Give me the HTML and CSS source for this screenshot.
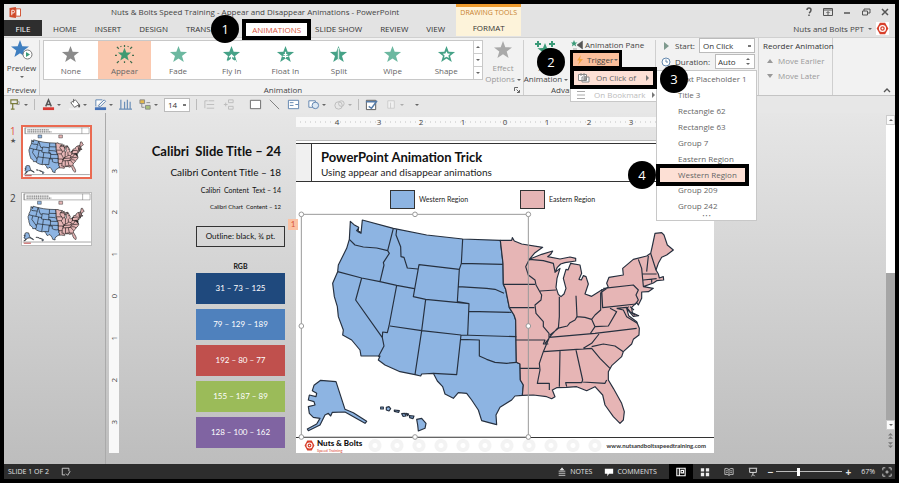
FILE: index.html
```html
<!DOCTYPE html>
<html lang="en">
<head>
<meta charset="utf-8">
<title>Nuts &amp; Bolts Speed Training - Appear and Disappear Animations - PowerPoint</title>
<link rel="stylesheet" href="styles.css">
</head>
<body>
<svg class="defs" aria-hidden="true">
  <symbol id="star" viewBox="0 0 20 20"><path d="M10 1l2.300 6.200 6.700.2-5.300 4.100 1.900 6.500L10 14.300l-5.600 3.700 1.900-6.500L1 7.400l6.700-.2z"/></symbol>
  <symbol id="nut" viewBox="0 0 20 20"><path d="M6 1h8l5 9-5 9H6L1 10z" fill="#d8402c"/><circle cx="10" cy="10" r="4.500" fill="#d8402c" stroke="#fff" stroke-width="2"/><circle cx="10" cy="10" r="1.500" fill="#fff"/></symbol>
  <g id="usa" stroke-linejoin="round">
    <g fill="#8db4e2">
      <path d="M151 64L162 74 176 82 174 95 183 100 187 60 280 85 380 105 488 117 601 121 609 190 610 253 617 268 628 323 642 345 647 360 649 487 660 492 661 540 670 555 667 586 645 588 635 600 600 622 588 645 590 674 567 668 545 662 535 630 515 600 500 580 475 578 460 595 435 582 428 560 412 543 400 520 365 522 362 528 345 524 300 515 255 495 235 480 240 468 183 468 180 450 155 420 128 405 130 390 115 350 112 320 103 290 98 250 113 215 115 195 140 145 148 118z"/>
      <path d="M62 541L108 545 135 628 160 638 200 664 195 670 135 636 97 637 92 648 85 640 75 645 60 675 25 692 22 687 50 672 60 655 40 652 28 640 25 620 45 615 42 605 25 600 28 585 48 590 50 580 37 572 42 556z"/>
      <path d="M350 658L365 655 378 670 375 685 355 693 353 675z"/>
      <path d="M242 621h8v6h-8zM259 622l8-2 5 6-5 7-8-3zM283 630l15 2-2 5-13-3zM305 641l9-1 4 8-9 1zM318 640l8 2-3 5zM328 647l14 1-3 8-10-3z"/>
    </g>
    <g transform="translate(540)" fill="#e6b5b5">
      <path d="M61 121L95 121 97 113 103 123 125 132 188 142 165 158 148 178 185 163 218 153 212 163 203 170 240 177 270 171 287 175 287 183 255 188 242 192 232 202 225 217 240 205 231 235 228 262 235 283 243 290 252 282 258 265 250 235 258 208 264 210 272 190 300 195 305 220 297 238 304 240 310 227 318 230 325 252 315 282 335 289 365 270 385 262 380 250 387 232 430 225 428 205 460 178 500 168 512 160 517 138 525 100 545 98 552 105 562 135 580 150 560 165 545 172 535 190 528 210 535 222 538 234 550 230 551 240 530 242 520 249 490 260 520 265 505 275 485 276 485 295 475 315 470 308 455 322 457 338 476 347 460 349 440 325 446 347 470 365 478 385 477 405 460 418 455 432 430 455 425 470 395 497 385 515 385 540 400 565 425 610 433 635 430 660 420 670 400 650 375 615 368 585 345 560 320 572 290 560 260 562 230 563 217 570 225 590 215 596 200 590 160 585 127 586 130 555 121 540 120 492 109 487 107 360 102 345 88 323 77 268 70 253 69 190z"/>
    </g>
    <g fill="none">
      <path d="M148 118L165 135 190 141 230 144 263 152M280 85L263 152 268 160 250 188 252 195 240 245M113 215L185 234 240 245 290 256 343 266M290 88L288 105 302 140 303 170 312 172 322 204 353 207M478 208L357 194 340 290 377 298 507 311 503 405M488 117L484 190 478 208 472 305M484 190L609 193M475 260L560 265 585 268 612 280M377 298L365 392 345 524M507 334L634 337M185 234L167 300 247 413M290 256L267 378 262 398 248 396 247 413 252 438 235 470M270 378L365 392 483 405 649 410M483 405L470 524 400 520M472 305L507 311M481 418L538 420 538 468 560 478 585 487 620 490 649 487M176 84L170 92 182 96"/>
      <path transform="translate(540)" d="M72 253H165M148 178L137 200 145 225 165 240 168 255 185 285 183 300 165 315 168 340 190 365 190 380 207 400 207 415 195 430M88 323H163M180 273L228 270M238 290V350L235 385 210 405M288 287L291 350M210 410L232 385 262 378 270 368 285 360 291 350 315 352 335 358 345 345 362 330 362 278M365 268L368 323 468 312M362 278L385 262M108 420H195L190 432H205M120 505H177M207 415L190 455 178 490 180 510 172 550H208V570M207 412L345 400 470 385M190 455L335 445M357 402L335 430 310 445M240 452L238 560M288 450L308 540 305 548 257 548 260 560M308 546L375 550 380 540M335 445L360 475 390 505M335 440L370 432 405 438 430 455M370 265L460 255 475 270 468 285 475 300 468 310M335 358L345 380 385 378 410 335 390 325M345 380L330 402M410 325L440 322 450 335 465 345M410 325L430 330 440 350 472 370M475 178L485 205 490 258M505 168L500 215M512 160L528 210M488 222H530M490 240L530 236M148 178L190 182 220 190 225 215M515 238V248M446 320L440 325M450 320L462 330"/>
    </g>
  </g>
  <symbol id="mini" viewBox="-12 -180 1254 936">
    <path d="M20-165H1225V-55H20zM35-165V-55M1090-165V-55" fill="none" stroke="#555" stroke-width="8"/>
    <path d="M70-125H480M70-88H520" stroke="#777" stroke-width="22" stroke-dasharray="24 10"/>
    <path d="M270-30h68v54h-68z" fill="#8db4e2" stroke="#222" stroke-width="8"/><path d="M658-30h68v54h-68z" fill="#e6b5b5" stroke="#222" stroke-width="8"/>
    <use href="#usa" stroke="#111" stroke-width="11"/>
    <path d="M0 711H1240" stroke="#333" stroke-width="8"/><path d="M20 732H150" stroke="#b44" stroke-width="18"/>
  </symbol>
</svg>

<div class="app">
  <header class="titlebar">
    <svg class="app-logo" viewBox="0 0 12 12" aria-hidden="true"><path d="M0 1l7-1v12l-7-1z" fill="#d04a2a"/><path d="M7 2h5v8H7z" fill="#fff" stroke="#d04a2a"/><path d="M2.500 9V3.500h1.500a1.500 1.500 0 0 1 0 3H2.500" fill="none" stroke="#fff"/></svg>
    <h1>Nuts &amp; Bolts Speed Training - Appear and Disappear Animations - PowerPoint</h1>
    <div class="winbtns">
      <button aria-label="Help"><svg viewBox="0 0 10 10"><path d="M3 3q0-2 2-2t2 2-2 3M5 7.500V9" stroke-width="1.500"/></svg></button>
      <button aria-label="Ribbon options"><svg viewBox="0 0 10 10"><path d="M.5 1.500h9v7h-9zM.5 3h9M5 8V5M3.500 6L5 4.500 6.500 6"/></svg></button>
      <button aria-label="Minimize"><svg viewBox="0 0 10 10"><path d="M2 6h6" stroke-width="1.500"/></svg></button>
      <button aria-label="Restore"><svg viewBox="0 0 10 10"><path d="M1.500 4h5v4h-5zM3 4V2h6v4H7"/></svg></button>
      <button aria-label="Close"><svg viewBox="0 0 10 10"><path d="M2 2l6 6M8 2L2 8" stroke-width="1.500"/></svg></button>
    </div>
  </header>

  <nav class="tabs">
    <button class="tab file">FILE</button>
    <button class="tab">HOME</button>
    <button class="tab">INSERT</button>
    <button class="tab">DESIGN</button>
    <button class="tab">TRANSITIONS</button>
    <button class="tab active">ANIMATIONS<span class="badge step-one">1</span></button>
    <button class="tab">SLIDE SHOW</button>
    <button class="tab">REVIEW</button>
    <button class="tab">VIEW</button>
    <div class="context"><span>DRAWING TOOLS</span><button class="tab">FORMAT</button></div>
    <div class="user">Nuts and Bolts PPT <i class="caret"></i><svg viewBox="0 0 20 20"><use href="#nut"/></svg></div>
  </nav>

  <section class="ribbon">
    <div class="group preview">
      <button class="big"><svg viewBox="0 0 22 20"><path d="M9 0l2.300 6.200 6.700.2-5.300 4.100 1.900 6.500L9 13.300 3.400 17l1.900-6.500L0 6.400l6.700-.2z" fill="#3f7fc0"/><circle cx="16.500" cy="14.500" r="4.500" fill="#fff" stroke="#777"/><path d="M15 12l4 2.500-4 2.500z" fill="#3b9a78"/></svg>Preview<i class="caret"></i></button>
      <span class="label">Preview</span>
    </div>
    <div class="group animation">
      <div class="row">
        <div class="gallery">
          <button class="none"><svg viewBox="0 0 20 20"><use href="#star"/></svg>None</button>
          <button class="chosen"><svg viewBox="0 0 20 20"><path d="M10 3l1.900 4.800 5.100.2-4 3.200 1.400 5-4.400-2.800-4.400 2.800 1.400-5-4-3.200 5.100-.2z"/><path d="M2 2l2 2M10 0v2M18 2l-2 2M0 11h2M18 11h2M2 19l2-2M18 19l-2-2M6 1l.5 1M14 1l-.5 1M10 17v2" stroke="#3d6b4c" stroke-width="1.300"/></svg>Appear</button>
          <button class="fade"><svg viewBox="0 0 20 20"><use href="#star"/></svg>Fade</button>
          <button><svg viewBox="0 0 20 20"><use href="#star"/><path d="M10 18v-7M7.500 13L10 10.500 12.500 13M5 19v-3M14 19v-3" fill="none" stroke="#fff" stroke-width="1.500"/></svg>Fly In</button>
          <button><svg viewBox="0 0 20 20"><use href="#star"/><path d="M10 7v7M8 10h4M7 12h6" stroke="#fff" stroke-width="1.300"/></svg>Float In</button>
          <button><svg viewBox="0 0 20 20"><use href="#star"/><path d="M10 3v13" stroke="#d5ebe3" stroke-width="1.500"/></svg>Split</button>
          <button class="wipe"><svg viewBox="0 0 20 20"><use href="#star"/></svg>Wipe</button>
          <button><svg viewBox="0 0 20 20"><use href="#star"/><path d="M10 6.500l1.200 2.500 2.800.2-2 1.900.6 2.700-2.600-1.500-2.600 1.500.6-2.700-2-1.900 2.800-.2z" fill="#fff"/></svg>Shape</button>
          <div class="scroll"><button aria-label="Scroll up"><i class="caret up"></i></button><button aria-label="Scroll down"><i class="caret"></i></button><button aria-label="More"><i class="caret"></i></button></div>
        </div>
        <button class="big effect"><svg viewBox="0 0 20 20"><use href="#star"/></svg>Effect<span>Options <i class="caret"></i></span></button>
      </div>
      <span class="label">Animation<svg class="launcher" viewBox="0 0 6 6"><path d="M.5 4V.5H4M2.500 2.500l3 3M5.500 3v2.500H3" fill="none" stroke="#666"/></svg></span>
    </div>
    <div class="group advanced">
      <div class="row">
        <button class="big add"><svg viewBox="0 0 22 20"><path d="M10 3l2 5 5.500.2-4.300 3.400 1.500 5.400-4.700-3L5.300 17l1.500-5.400L2.500 8.200 8 8z" fill="#3b9a78"/><path d="M3 1v6M0 4h6M17 1v6M14 4h6" stroke="#3b9a78" stroke-width="2"/></svg>Add<span>Animation <i class="caret"></i></span><span class="badge step-two">2</span></button>
        <div class="stack">
          <button class="line"><svg viewBox="0 0 12 10"><path d="M3 0l1 2.500h2.500L4.500 4l.7 2.500L3 5 1 6.500 1.500 4 0 2.500h2z" fill="#3b9a78"/><path d="M11.500 1v8L6 5zM2 9h4" fill="#555" stroke="#555" stroke-width=".5"/></svg>Animation Pane</button>
          <div class="trigger">
            <button class="line framed"><svg viewBox="0 0 12 10"><path d="M7 0L3 5.500h2.500L4 10l5-6H6z" fill="#f2a443"/></svg>Trigger<i class="caret"></i></button>
            <ul class="menu first">
              <li class="framed"><svg viewBox="0 0 12 10"><path d="M.5 1.500h8v6h-8zM3 0v3M6 0v3M4 4h7v5H4z" fill="#fff" stroke="#888"/><path d="M7 3v5M5 6h4" stroke="#777"/></svg>On Click of<i class="caret right"></i><span class="badge step-three">3</span></li>
              <li class="dim"><svg viewBox="0 0 12 10"><path d="M1 1.500h8M1 5h8M1 8.500h8" stroke="#aaa"/></svg>On Bookmark<i class="caret right"></i></li>
            </ul>
          </div>
        </div>
      </div>
      <span class="label">Advanced Animation</span>
    </div>
    <div class="group timing">
      <div class="field"><svg viewBox="0 0 10 10"><path d="M3 1l5 4-5 4z" fill="#7f9a8e"/></svg><label for="start">Start:</label><select id="start"><option>On Click</option></select></div>
      <div class="field"><svg viewBox="0 0 10 10"><circle cx="5" cy="5" r="4" fill="#fff" stroke="#6488ad"/><path d="M5 2.500V5h2" fill="none" stroke="#6488ad"/></svg><label for="duration">Duration:</label><span class="spin"><input id="duration" value="Auto"><span><i class="caret up"></i><i class="caret"></i></span></span></div>
      <ul class="menu second">
        <li>Text Placeholder 1</li>
        <li>Title 3</li>
        <li>Rectangle 62</li>
        <li>Rectangle 63</li>
        <li>Group 7</li>
        <li>Eastern Region</li>
        <li class="framed">Western Region<span class="badge step-four">4</span></li>
        <li>Group 209</li>
        <li>Group 242</li>
        <li class="more">• • •</li>
      </ul>
    </div>
    <div class="group reorder">
      <b>Reorder Animation</b>
      <button class="line"><i class="tri up"></i>Move Earlier</button>
      <button class="line"><i class="tri"></i>Move Later</button>
    </div>
    <button class="collapse" aria-label="Collapse ribbon"><svg viewBox="0 0 8 6"><path d="M1 5l3-3 3 3" fill="none" stroke="#555" stroke-width="1.300"/></svg></button>
  </section>

  <div class="quick">
    <button class="drop" aria-label="Format painter"><svg viewBox="0 0 14 14"><path d="M2 2h7v4H2zM4 6v6M2 12h4" fill="none" stroke="#7a7c3c" stroke-width="1.300"/><path d="M9 4h2v3H8" fill="none" stroke="#999"/></svg><i class="caret"></i></button>
    <span class="sep"></span>
    <button class="drop" aria-label="Font colour"><svg viewBox="0 0 14 14"><path d="M4 9l3-7 3 7M5 7h4" fill="none" stroke="#555" stroke-width="1.500"/><path d="M1 10h12v3H1z" fill="#d83a34"/></svg><i class="caret"></i></button>
    <button class="drop" aria-label="Fill colour"><svg viewBox="0 0 14 14"><path d="M3 5l5-3 4 5-5 3zM6 1v4" fill="#fff" stroke="#666"/><path d="M12 7v3" stroke="#555" stroke-width="2"/><path d="M1 11h12v2H1z" fill="#f4f4f4"/></svg><i class="caret"></i></button>
    <button class="drop" aria-label="Outline colour"><svg viewBox="0 0 14 14"><path d="M2 9V2h7M5 8l6-6 1.500 1.500L7 9H5z" fill="#fff" stroke="#5a7fae"/><path d="M1 10h12v3H1z" fill="#4472b8"/></svg><i class="caret"></i></button>
    <button aria-label="Align"><svg viewBox="0 0 14 14"><path d="M2 2v10M6 4v8M9 2v10M12 4v8M0 12h14" stroke="#6b8fb8" stroke-width="1.300"/></svg></button>
    <button class="drop" aria-label="Arrange"><svg viewBox="0 0 14 14"><path d="M1 2h5v4H1z" fill="#e3b84c" stroke="#888"/><path d="M7 8h5v4H7z" fill="#a9c379" stroke="#888"/><path d="M3 6v4h3M8 5h4" fill="none" stroke="#888"/></svg><i class="caret"></i></button>
    <select aria-label="Font size"><option>14</option></select>
    <span class="sep"></span>
    <button class="pale" aria-label="Group"><svg viewBox="0 0 14 14"><path d="M2 3h3M6 3h6M4 7h8M4 11h8M2 3v8" fill="none" stroke="#888"/></svg></button>
    <button class="pale" aria-label="Ungroup"><svg viewBox="0 0 14 14"><path d="M7 2h5v3H7zM7 9h5v3H7zM4 5v4M2 7h4" fill="none" stroke="#888"/></svg></button>
    <button class="lead" aria-label="Rectangle"><svg viewBox="0 0 14 14"><path d="M1.500 2.500h11v9h-11z" fill="#fff" stroke="#666"/></svg></button>
    <button aria-label="Line"><svg viewBox="0 0 14 14"><path d="M2 2l10 10" stroke="#777"/></svg></button>
    <button aria-label="Text box"><svg viewBox="0 0 14 14"><path d="M1.500 2.500h11v9h-11z" fill="#fff" stroke="#5d82ad"/><path d="M3 5h4M3 8h4M9 7h3" stroke="#5d82ad"/></svg></button>
    <button class="drop" aria-label="Shapes"><svg viewBox="0 0 14 14"><path d="M2 3h7v7H2z" fill="#fff" stroke="#5d82ad"/><circle cx="9" cy="8" r="3.500" fill="#dce8f4" stroke="#5d82ad"/></svg><i class="caret"></i></button>
    <button class="drop pale" aria-label="Merge shapes"><svg viewBox="0 0 14 14"><circle cx="6" cy="8" r="4" fill="none" stroke="#888"/><circle cx="9" cy="6" r="3" fill="none" stroke="#888"/></svg><i class="caret"></i></button>
    <span class="sep"></span>
    <button aria-label="Selection pane"><svg viewBox="0 0 14 14"><path d="M1.500 2.500h10v10h-10z" fill="#fff" stroke="#555"/><path d="M1 4h11M4 9l3 2 6-8" fill="none" stroke="#557ba8" stroke-width="1.500"/></svg></button>
    <button class="drop pale" aria-label="Paste"><svg viewBox="0 0 14 14"><path d="M3 3h7v8H3zM6 5v6" fill="#fff" stroke="#aaa"/></svg><i class="caret"></i></button>
    <button aria-label="More commands"><i class="caret"></i></button>
  </div>

  <main class="work">
    <aside class="slides">
      <div class="slide-item current"><span>1<small>★</small></span><svg viewBox="-12 -180 1254 936"><use href="#mini" x="-12" y="-180" width="1254" height="936"/></svg></div>
      <div class="slide-item"><span>2</span><svg viewBox="-12 -180 1254 936"><use href="#mini" x="-12" y="-180" width="1254" height="936"/></svg></div>
    </aside>
    <div class="vruler"><span>3</span><span>2</span><span>1</span><span>0</span><span>1</span><span>2</span><span>3</span></div>
    <aside class="notes">
      <p class="n24">Calibri &nbsp;Slide Title – 24</p>
      <p class="n18">Calibri Content Title – 18</p>
      <p class="n14">Calibri &nbsp;Content &nbsp;Text – 14</p>
      <p class="n12">Calibri Chart &nbsp;Content – 12</p>
      <div class="outline">Outline: black, ¾ pt.</div>
      <b>RGB</b>
      <div class="sw navy">31 – 73 – 125</div>
      <div class="sw blue">79 – 129 – 189</div>
      <div class="sw red">192 – 80 – 77</div>
      <div class="sw green">155 – 187 – 89</div>
      <div class="sw purple">128 – 100 – 162</div>
    </aside>
    <div class="stage">
      <div class="hruler"><span>4</span><span>3</span><span>2</span><span>1</span><span>0</span><span>1</span><span>2</span><span>3</span><span>4</span></div>
      <article class="slide">
        <header><div><h2>PowerPoint Animation Trick</h2><p>Using appear and disappear animations</p></div></header>
        <div class="legend"><span><i class="west"></i>Western Region</span><span><i class="east"></i>Eastern Region</span></div>
        <div class="map">
          <svg viewBox="-12 18 1254 693" role="img" aria-label="Map of the United States">
            <use href="#usa" stroke="#26303f" stroke-width="3.500"/>
            <path d="M4 43H685V711H4z" fill="none" stroke="#999" stroke-width="3"/>
            <g fill="#fff" stroke="#999" stroke-width="3"><circle cx="4" cy="43" r="7"/><circle cx="345" cy="43" r="7"/><circle cx="685" cy="43" r="7"/><circle cx="4" cy="378" r="7"/><circle cx="685" cy="378" r="7"/><circle cx="4" cy="711" r="7"/><circle cx="345" cy="711" r="7"/><circle cx="685" cy="711" r="7"/></g>
          </svg>
          <span class="order">1</span>
        </div>
        <footer><svg viewBox="0 0 20 20"><use href="#nut"/></svg><div><b>Nuts &amp; Bolts</b><small>Speed Training</small></div><span class="pattern"></span><a href="#">www.nutsandboltsspeedtraining.com</a></footer>
      </article>
    </div>
    <div class="vscroll"><button aria-label="Scroll up"><i class="caret up"></i></button><div class="track"><span></span></div><button aria-label="Scroll down"><i class="caret"></i></button><button class="plain" aria-label="Previous slide"><svg viewBox="0 0 6 8"><path d="M0 4l3-3 3 3zM0 8l3-3 3 3z" fill="#777"/></svg></button><button class="plain" aria-label="Next slide"><svg viewBox="0 0 6 8"><path d="M0 0l3 3 3-3zM0 4l3 3 3-3z" fill="#777"/></svg></button></div>
  </main>

  <footer class="status">
    <span>SLIDE 1 OF 2</span>
    <svg viewBox="0 0 12 12"><path d="M5 9.500H1.500v-8h8V5M6 8l2 2 3-5" fill="none" stroke="#ddd"/></svg>
    <div class="right">
      <button><svg viewBox="0 0 12 12"><path d="M2 5h8M2 7.500h8M2 10h8M6 1l2 2.500H4z" stroke="#ddd" fill="#ddd"/></svg>NOTES</button>
      <button><svg viewBox="0 0 12 12"><path d="M1 2h10v6H6l-2 3V8H1z" fill="#fff"/></svg>COMMENTS</button>
      <button class="view on" aria-label="Normal"><svg viewBox="0 0 12 12"><path d="M1 1.500h10v9H1zM4 1.500v9M6 4h3v3H6z" fill="none" stroke="#fff" stroke-width="1.300"/></svg></button>
      <button class="view" aria-label="Slide sorter"><svg viewBox="0 0 12 12"><path d="M1 1.500h4v4H1zM7 1.500h4v4H7zM1 7h4v4H1zM7 7h4v4H7z" fill="#eee"/></svg></button>
      <button class="view" aria-label="Reading view"><svg viewBox="0 0 12 12"><path d="M6 3Q3 1 1 2v7q3-1 5 1 2-2 5-1V2Q8 1 6 3v7M2.500 4.500h2M2.500 6.500h2M7.500 4.500h2M7.500 6.500h2" fill="none" stroke="#ccc"/></svg></button>
      <button class="view" aria-label="Slide show"><svg viewBox="0 0 12 12"><path d="M1 1.500h10M2 2v4.500h8V2M6 6.500V9M4 11l2-2 2 2" fill="none" stroke="#ddd" stroke-width="1.200"/></svg></button>
      <span class="zoom"><b>−</b><input type="range" aria-label="Zoom" min="0" max="100" value="32"><b>+</b></span>
      <span class="pct">67%</span>
      <svg viewBox="0 0 12 12"><path d="M1 4V1h3M8 1h3v3M11 8v3H8M4 11H1V8M4 6h4M6 4v4" fill="none" stroke="#ddd"/></svg>
    </div>
  </footer>
</div>
</body>
</html>
```
FILE: styles.css
```css
* { box-sizing: border-box; }
body { margin: 0; background: #000; font: 8px/12px "Open Sans", "Noto Sans", sans-serif; color: #444; }
h1, h2, p, ul { margin: 0; padding: 0; }
ul { list-style: none; }
button { border: 0; padding: 0; background: none; font: inherit; color: inherit; }
select, input { font: inherit; color: #333; }
svg { display: block; flex: none; }
.defs { position: absolute; width: 0; height: 0; }

.app { min-height: 100vh; padding: 4px; display: flex; flex-direction: column; background: #000; }

.caret { display: inline-block; flex: none; border: 2px solid transparent; border-top-color: #666; border-bottom: 0; vertical-align: middle; }
.caret.up { transform: rotate(180deg); }
.caret.right { border: 3px solid transparent; border-left-color: #777; border-right: 0; }

.badge { position: absolute; z-index: 5; width: 28px; height: 28px; border-radius: 50%; background: #000; color: #fff; font-size: 13px; line-height: 28px; text-align: center; }
.step-one { right: 100%; margin-right: 7px; top: -8px; }
.step-two { left: 13px; top: 8px; }
.step-three { left: 86px; top: -6px; }
.step-four { right: 100%; margin-right: 4px; top: -7px; }

/* Title bar and tabs */
.titlebar { height: 16px; padding: 0 5px; display: flex; align-items: center; background: #e3e3e3; }
.app-logo { width: 12px; height: 11px; }
.titlebar h1 { margin-left: 90px; font-size: 8px; font-weight: 400; }
.winbtns { margin-left: auto; display: flex; gap: 9px; }
.winbtns svg { width: 10px; height: 10px; fill: none; stroke: #555; }
.tabs { height: 17px; display: flex; background: #e3e3e3; }
.tab { padding: 0 9px; line-height: 17px; height: 17px; color: #333; white-space: nowrap; }
.file { width: 38px; background: #2e2e2e; color: #fff; margin-right: 2px; height: 16px; }
.active { position: relative; margin: -1px -5px 0 -3px; height: 21px; padding: 0 6px; border: 4px solid #000; line-height: 13px; background: #fff; color: #d8553a; z-index: 4; }
.context { margin: -16px 0 0 2px; width: 65px; height: 32px; border-top: 3px solid #ee9b2d; background: #fdf3da; text-align: center; }
.context span { display: block; color: #c8822e; font-size: 7px; line-height: 12px; white-space: nowrap; }
.context .tab { width: 100%; }
.user { margin-left: auto; display: flex; align-items: center; gap: 4px; padding-right: 6px; }
.user svg { width: 13px; height: 13px; background: #fff; }

/* Ribbon */
.ribbon { height: 59px; padding-top: 2px; display: flex; background: #f2f2f2; border-top: 1px solid #d0d0d0; border-bottom: 1px solid #c4c4c4; }
.group { display: flex; flex-direction: column; border-right: 1px solid #cfcfcf; position: relative; }
.group .label { margin-top: auto; line-height: 11px; text-align: center; position: relative; white-space: nowrap; }
.row { display: flex; }
.big { display: flex; flex-direction: column; align-items: center; position: relative; line-height: 12px; white-space: nowrap; }
.big svg { width: 22px; height: 20px; margin-bottom: 2px; }
.big > .caret { margin-top: 2px; }
.preview { width: 36px; }
.animation { width: 484px; padding-left: 3px; }
.gallery { flex: 1; display: grid; grid-template-columns: repeat(8, 1fr) 9px; height: 40px; border: 1px solid #c8c8c8; background: #fff; }
.gallery > button { display: flex; flex-direction: column; align-items: center; padding-top: 4px; line-height: 14px; color: #666; fill: #45a287; }
.gallery > button svg { width: 19px; height: 19px; }
.gallery .none { fill: #8b8b8b; }
.gallery .chosen { background: #fbc9b0; fill: #3f9a72; }
.gallery .fade, .gallery .wipe { fill: #6cb8a0; }
.scroll { display: grid; border-left: 1px solid #ccc; }
.scroll button { display: flex; align-items: center; justify-content: center; }
.scroll button + button { border-top: 1px solid #ccc; }
.effect { width: 40px; color: #999; fill: #a9a9a9; line-height: 11px; }
.launcher { position: absolute; right: 3px; top: 3px; width: 6px; height: 6px; }
.advanced { width: 132px; }
.add { width: 44px; line-height: 11px; }
.stack { padding-left: 3px; }
.line { display: flex; align-items: center; gap: 2px; height: 13px; white-space: nowrap; }
.line svg { width: 12px; height: 10px; }
.stack > .line { height: 10px; }
.trigger { position: relative; }
.trigger > .framed { margin-left: -1px; height: 19px; padding: 0 1px; gap: 1px; border: 3px solid #000; background: #fbbf9c; }
.menu { position: absolute; z-index: 3; background: #fff; border: 1px solid #c8c8c8; color: #666; white-space: nowrap; }
.first { z-index: 4; left: -1px; top: 17px; width: 87px; }
.first li { position: relative; display: flex; align-items: center; gap: 6px; height: 13px; padding: 0 5px; }
.first li svg { width: 12px; height: 10px; }
.first li .caret { margin-left: auto; }
.first .framed { height: 22px; margin: -1px; border: 4px solid #000; padding: 0 4px; background: #fde0d5; }
.first .dim { color: #bbb; }
.timing { width: 103px; margin-top: -2px; padding: 0 3px 0 5px; gap: 1px; }
.field { display: flex; align-items: center; gap: 4px; height: 15px; }
.field svg { width: 10px; height: 10px; }
.field select, .spin { margin-left: auto; height: 15px; border: 1px solid #bbb; background: #fff; }
select { appearance: none; border-radius: 0; padding: 0 3px; background: linear-gradient(#777, #777) no-repeat right 3px center / 3px 2px, #fff; }
.field select { width: 59px; background: linear-gradient(#777, #777) no-repeat right 3px center / 3px 2px, #fff; }
.spin { width: 40px; display: flex; align-items: center; }
.spin input { width: 30px; border: 0; padding: 0 2px; background: none; }
.spin span { display: grid; gap: 3px; }
.second { left: 0; top: 32px; width: 101px; }
.second li { height: 16px; line-height: 16px; padding-left: 21px; }
.second .framed { position: relative; height: 22px; margin: -3px 7px -4px -1px; border: 4px solid #000; padding-left: 18px; line-height: 14px; background: #fde0d5; z-index: 1; }
.second .more { height: 6px; line-height: 4px; padding: 0; font-size: 5px; text-align: center; }
.reorder { width: 74px; margin-top: -2px; padding: 0 4px; }
.reorder b { line-height: 15px; font-weight: 400; color: #333; white-space: nowrap; }
.reorder .line { gap: 5px; height: 15px; padding-left: 4px; color: #999; }
.tri { border: 3px solid transparent; border-top: 4px solid #999; border-bottom: 0; }
.tri.up { transform: rotate(180deg); }
.collapse { margin: auto 4px 2px auto; }
.collapse svg { width: 8px; height: 6px; }

/* Quick access row */
.quick { height: 17px; padding-left: 4px; display: flex; align-items: center; gap: 6px; background: #e7e7e7; }
.quick button { display: flex; align-items: center; justify-content: center; gap: 2px; width: 13px; }
.quick .drop { width: 20px; }
.quick svg { width: 13px; height: 13px; }
.quick .pale { opacity: .45; }
.quick .sep { width: 1px; height: 11px; background: #bbb; }
.quick .lead { margin-left: 8px; }
.quick select { width: 26px; height: 14px; border: 1px solid #bbb; }

/* Workspace */
.work { flex: 1; display: flex; background: linear-gradient(#e6e6e6, #bdbdbd); }
.slides { width: 102px; padding: 12px 13px 0 6px; border-right: 1px solid #aaa; display: flex; flex-direction: column; gap: 13px; }
.slide-item { display: flex; gap: 4px; }
.slide-item span { width: 7px; font-size: 10px; line-height: 12px; display: flex; flex-direction: column; }
.slide-item small { font-size: 7px; line-height: 8px; color: #555; }
.slide-item svg { flex: 1; min-width: 0; background: #fff; border: 1px solid #bbb; }
.current span { color: #e2553b; }
.current svg { border: 2px solid #ea6a51; }
.vruler { width: 10px; margin: 27px 0 11px 3px; padding: 10px 0; background: #f8f8f8; display: flex; flex-direction: column; justify-content: space-around; }
.vruler span { writing-mode: vertical-rl; transform: rotate(180deg); text-align: center; line-height: 10px; }
.notes { flex: 1; padding: 27px 11px 0 0; font-family: Lato, sans-serif; color: #111; display: flex; flex-direction: column; align-items: flex-end; white-space: nowrap; }
.notes p { padding-right: 4px; }
.n24 { font-size: 13px; font-weight: 700; line-height: 22px; }
.n18 { font-size: 10px; line-height: 20px; }
.n14 { font-size: 7px; line-height: 17px; }
.n12 { font-size: 6px; line-height: 15px; }
.outline { width: 89px; height: 21px; margin: 12px 0; border: 1px solid #333; font-size: 8px; line-height: 19px; text-align: center; }
.notes b { width: 89px; font-size: 7px; line-height: 14px; text-align: center; }
.sw { width: 89px; height: 31px; margin-bottom: 5px; font-size: 8px; line-height: 31px; text-align: center; color: #fff; }
.navy { background: #1f497d; }
.blue { background: #4f81bd; }
.red { background: #c0504d; }
.green { background: #9bbb59; }
.purple { background: #8064a2; }
.stage { width: 418px; padding-top: 4px; }
.hruler { height: 10px; margin-bottom: 13px; padding: 0 20px; background: #f8f8f8 repeating-linear-gradient(90deg, transparent 0 4px, #ddd 4px 5px) no-repeat 0 4px / 100% 2px; display: flex; justify-content: space-around; line-height: 10px; }
.slide { background: #fff; font-family: Lato, sans-serif; color: #222; }
.slide > header { border-top: 1px solid #bbb; padding-top: 2px; }
.slide > header div { height: 39px; padding: 6px 10px 0; border: 1px solid #333; border-width: 1px 0; background: linear-gradient(90deg, #f0f0f0 15px, #333 15px 16px, #fff 16px); }
.slide h2 { padding-left: 15px; font-size: 13px; line-height: 15px; color: #111; }
.slide header p { padding-left: 15px; font-size: 10px; line-height: 15px; }
.legend { height: 24px; display: flex; align-items: flex-start; padding: 8px 0 0 94px; gap: 52px; font-size: 7px; line-height: 19px; }
.legend span { display: flex; gap: 4px; }
.legend i { width: 25px; height: 19px; border: 1px solid #333; }
.west { background: #8db4e2; }
.east { background: #e6b5b5; }
.map { position: relative; border-bottom: 1px solid #333; }
.map svg { width: 100%; height: auto; overflow: visible; position: relative; }
.order { position: absolute; left: -8px; top: 13px; width: 10px; height: 11px; line-height: 11px; text-align: center; background: #fbc1a3; color: #d8553a; }
.slide footer { height: 15px; padding: 0 8px; display: flex; align-items: center; gap: 2px; }
.slide footer svg { width: 11px; height: 11px; }
.slide footer b { display: block; font-size: 8px; line-height: 9px; font-weight: 900; color: #111; }
.slide footer small { display: block; font-size: 4px; line-height: 5px; color: #d8402c; }
.pattern { flex: 1; height: 13px; background: radial-gradient(circle, #fff 2px, #f3f3f3 3px 6px, transparent 7px) 0 0 / 22px 13px; }
.slide a { font-size: 6px; font-weight: 700; color: #333; text-decoration: none; }
.vscroll { width: 9px; margin: 2px 0 14px 172px; display: flex; flex-direction: column; }
.vscroll button { height: 10px; display: flex; align-items: center; justify-content: center; background: #fafafa; border: 1px solid #ccc; }
.vscroll .plain { background: none; border: 0; }
.vscroll svg { width: 5px; height: 7px; }
.track { flex: 1; background: #a6a6a6; }
.track span { display: block; height: 50%; background: #fff; }

/* Status bar */
.status { height: 15px; padding: 0 3px 0 4px; display: flex; align-items: center; gap: 12px; background: #2d2d2d; color: #e4e4e4; font-size: 7px; white-space: nowrap; }
.status svg { width: 10px; height: 10px; }
.right { margin-left: auto; display: flex; align-items: center; }
.right button { display: flex; align-items: center; gap: 3px; height: 15px; margin-right: 12px; }
.right .view { width: 24px; margin: 0; justify-content: center; }
.right .on { background: #000; }
.zoom { display: flex; align-items: center; gap: 3px; margin: 0 10px 0 3px; font-size: 10px; }
.zoom input { appearance: none; width: 66px; height: 1px; margin: 0; background: #bbb; }
.zoom input::-webkit-slider-thumb { appearance: none; width: 3px; height: 8px; background: #fff; }
.pct { margin-right: 7px; }
```
